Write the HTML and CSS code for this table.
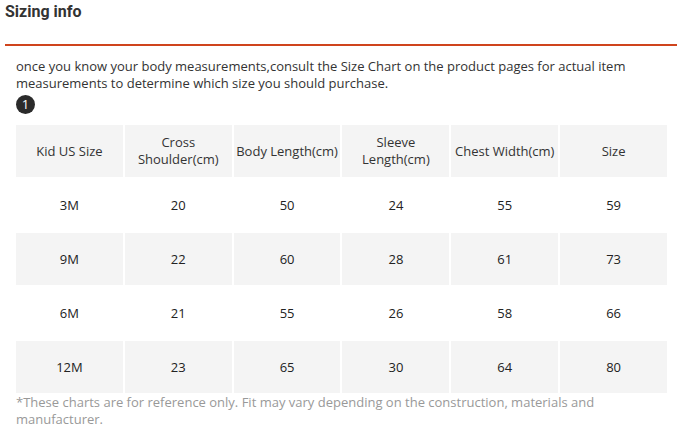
FILE: index.html
```html
<!DOCTYPE html>
<html>
<head>
<meta charset="utf-8">
<link rel="stylesheet" href="styles.css">
</head>
<body>
<div class="page">
  <h2 class="title">Sizing info</h2>
  <div class="rule"></div>
  <div class="content">
    <p class="intro">once you know your body measurements,consult the Size Chart on the product pages for actual item measurements to determine which size you should purchase.</p>
    <div class="badge">1</div>
    <table class="chart">
      <thead>
        <tr><th>Kid US Size</th><th>Cross<br>Shoulder(cm)</th><th>Body Length(cm)</th><th>Sleeve<br>Length(cm)</th><th>Chest Width(cm)</th><th>Size</th></tr>
      </thead>
      <tbody>
        <tr><td>3M</td><td>20</td><td>50</td><td>24</td><td>55</td><td>59</td></tr>
        <tr class="alt"><td>9M</td><td>22</td><td>60</td><td>28</td><td>61</td><td>73</td></tr>
        <tr><td>6M</td><td>21</td><td>55</td><td>26</td><td>58</td><td>66</td></tr>
        <tr class="alt"><td>12M</td><td>23</td><td>65</td><td>30</td><td>64</td><td>80</td></tr>
      </tbody>
    </table>
    <p class="note">*These charts are for reference only. Fit may vary depending on the construction, materials and manufacturer.</p>
  </div>
</div>
</body>
</html>
```

FILE: styles.css
```css
html, body {
  margin: 0;
  padding: 0;
  background: #fff;
}
.page {
  padding-left: 5px;
  font-family: "Open Sans", "Liberation Sans", sans-serif;
  color: #333;
}
.title {
  margin: 0;
  padding-top: 2px;
  font-family: Roboto, "Liberation Sans", sans-serif;
  font-size: 16px;
  line-height: 20px;
  font-weight: 700;
  color: #333;
}
.rule {
  margin-top: 22px;
  height: 2px;
  background: #cf441d;
}
.content {
  padding: 0 10px 0 11px;
}
.intro {
  margin: 12px 0 0;
  font-size: 13px;
  line-height: 17px;
  color: #333;
}
.badge {
  margin-top: 3px;
  width: 19px;
  height: 19px;
  border-radius: 50%;
  background: #2b2b2b;
  color: #fff;
  font-size: 13px;
  line-height: 19px;
  text-align: center;
}
.chart {
  margin: 9px 0 -2px -2px;
  width: calc(100% + 4px);
  border-collapse: separate;
  border-spacing: 2px;
  table-layout: fixed;
  font-size: 13px;
  color: #333;
}
.chart th, .chart td {
  height: 52px;
  padding: 0;
  text-align: center;
  vertical-align: middle;
  font-weight: 400;
  line-height: 17px;
}
.chart th {
  background: #f4f4f4;
}
.chart td {
  color: #222;
  background: #fff;
}
.chart tr.alt td {
  background: #f4f4f4;
}
.note {
  margin: 1px 0 0;
  font-size: 13px;
  line-height: 17px;
  color: #999;
}
```
